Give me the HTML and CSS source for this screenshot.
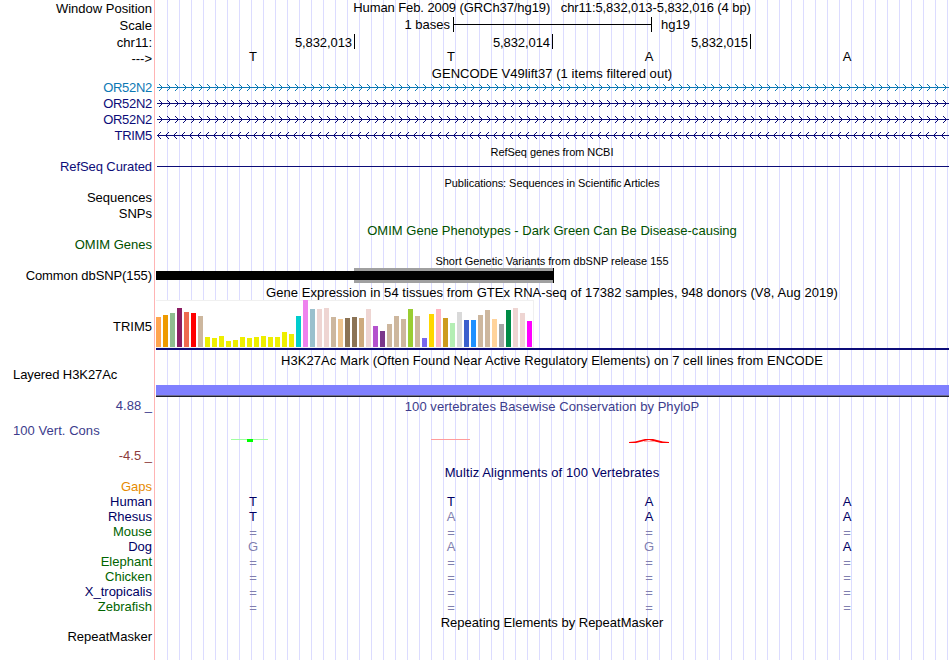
FILE: index.html
```html
<!DOCTYPE html>
<html lang="en">
<head>
    <meta charset="UTF-8">
    <title>Genome Browser</title>
    <link rel="stylesheet" href="styles.css">
</head>
<body>
    <div class="browser">
        <div class="row ruler">
            <div class="label">Window Position</div>
            <div class="plot center position">Human Feb. 2009 (GRCh37/hg19) &nbsp; chr11:5,832,013-5,832,016 (4 bp)</div>
        </div>
        <div class="row ruler">
            <div class="label">Scale</div>
            <div class="plot scale"><span class="scale-text">1 bases</span><span class="scale-bar"></span><span>hg19</span></div>
        </div>
        <div class="row ruler">
            <div class="label">chr11:</div>
            <div class="plot ticks"><span>5,832,013</span><span>5,832,014</span><span>5,832,015</span></div>
        </div>
        <div class="row strand">
            <div class="label">---&gt;</div>
            <div class="plot bases"><span>T</span><span>T</span><span>A</span><span>A</span></div>
        </div>

        <div class="title wide">GENCODE V49lift37 (1 items filtered out)</div>
        <div class="row gene">
            <div class="label teal">OR52N2</div>
            <svg class="plot teal" data-dir="fwd" width="794" height="16"></svg>
        </div>
        <div class="row gene">
            <div class="label blue">OR52N2</div>
            <svg class="plot blue" data-dir="fwd" width="794" height="16"></svg>
        </div>
        <div class="row gene">
            <div class="label blue">OR52N2</div>
            <svg class="plot blue" data-dir="fwd" width="794" height="16"></svg>
        </div>
        <div class="row gene">
            <div class="label blue">TRIM5</div>
            <svg class="plot blue" data-dir="rev" width="794" height="16"></svg>
        </div>

        <div class="title small">RefSeq genes from NCBI</div>
        <div class="row">
            <div class="label narrow blue">RefSeq Curated</div>
            <div class="plot"><div class="refseq-line"></div></div>
        </div>

        <div class="title small">Publications: Sequences in Scientific Articles</div>
        <div class="row"><div class="label">Sequences</div></div>
        <div class="row"><div class="label">SNPs</div></div>

        <div class="title spaced green omim">OMIM Gene Phenotypes - Dark Green Can Be Disease-causing</div>
        <div class="row"><div class="label green">OMIM Genes</div></div>

        <div class="title small snp-title">Short Genetic Variants from dbSNP release 155</div>
        <div class="row snp">
            <div class="label narrow">Common dbSNP(155)</div>
            <svg class="plot" width="794" height="17">
                <rect x="199" y="0" width="199" height="15" fill="#a0a0a0"/>
                <rect x="1" y="3" width="397" height="9"/>
                <rect x="398" y="0" width="1" height="15"/>
            </svg>
        </div>

        <div class="title tall wide">Gene Expression in 54 tissues from GTEx RNA-seq of 17382 samples, 948 donors (V8, Aug 2019)</div>
        <div class="row gtex">
            <div class="label">TRIM5</div>
            <div class="plot">
                <div class="bars" id="bars"></div>
                <div class="gene-line"></div>
            </div>
        </div>

        <div class="title wide">H3K27Ac Mark (Often Found Near Active Regulatory Elements) on 7 cell lines from ENCODE</div>
        <div class="row h3k27">
            <div class="label left narrow">Layered H3K27Ac</div>
            <div class="plot"><div class="signal"></div></div>
        </div>

        <div class="row cons">
            <div class="cons-labels">
                <div class="label violet">4.88 _</div>
                <div class="label left wide violet">100 Vert. Cons</div>
                <div class="label maroon">-4.5 _</div>
            </div>
            <div class="plot">
                <div class="cons-title wide violet">100 vertebrates Basewise Conservation by PhyloP</div>
                <svg width="794" height="20">
                    <rect x="76" y="6" width="37" height="1" fill="#a0ffa0"/>
                    <rect x="92" y="6" width="6" height="3" fill="#00ff00"/>
                    <rect x="276" y="6" width="39" height="1" fill="#ff9c9c"/>
                    <path d="M474 9 L480 8.6 L490 6 H498 L508 8.6 L514 9 V10 H506 L497 7.8 L494 7 L490 7.8 L481 10 H474 Z" fill="#ff0000"/>
                    <path d="M489 8.5 H499" stroke="#ffb0b0"/>
                </svg>
            </div>
        </div>

        <div class="title navy multiz">Multiz Alignments of 100 Vertebrates</div>
        <div class="row align"><div class="label orange">Gaps</div></div>
        <div class="row align">
            <div class="label navy">Human</div>
            <div class="plot bases navy"><span>T</span><span>T</span><span>A</span><span>A</span></div>
        </div>
        <div class="row align">
            <div class="label navy">Rhesus</div>
            <div class="plot bases navy"><span>T</span><span class="dim">A</span><span>A</span><span>A</span></div>
        </div>
        <div class="row align">
            <div class="label leaf">Mouse</div>
            <div class="plot bases dim eq"><span>=</span><span>=</span><span>=</span><span>=</span></div>
        </div>
        <div class="row align">
            <div class="label navy">Dog</div>
            <div class="plot bases dim"><span>G</span><span>A</span><span>G</span><span class="navy">A</span></div>
        </div>
        <div class="row align">
            <div class="label leaf">Elephant</div>
            <div class="plot bases dim eq"><span>=</span><span>=</span><span>=</span><span>=</span></div>
        </div>
        <div class="row align">
            <div class="label leaf">Chicken</div>
            <div class="plot bases dim eq"><span>=</span><span>=</span><span>=</span><span>=</span></div>
        </div>
        <div class="row align">
            <div class="label navy">X_tropicalis</div>
            <div class="plot bases dim eq"><span>=</span><span>=</span><span>=</span><span>=</span></div>
        </div>
        <div class="row align">
            <div class="label leaf">Zebrafish</div>
            <div class="plot bases dim eq"><span>=</span><span>=</span><span>=</span><span>=</span></div>
        </div>

        <div class="title spaced repeat">Repeating Elements by RepeatMasker</div>
        <div class="row"><div class="label">RepeatMasker</div></div>
    </div>
    <script>
        // GTEx tissues: colour, height in px
        const tissues = [
            ['#ffa54f', 30], ['#ee9a00', 32], ['#8fbc8f', 34], ['#8b1c62', 39], ['#ee6a50', 35], ['#ff0000', 34],
            ['#cdb79e', 31], ['#eeee00', 10], ['#eeee00', 9], ['#eeee00', 11], ['#eeee00', 6], ['#eeee00', 7],
            ['#eeee00', 10], ['#eeee00', 9], ['#eeee00', 10], ['#eeee00', 11], ['#eeee00', 10], ['#eeee00', 10],
            ['#eeee00', 15], ['#eeee00', 13], ['#00cdcd', 31], ['#ee82ee', 47], ['#9ac0cd', 38], ['#eed5d2', 38],
            ['#eed5d2', 39], ['#cdb79e', 30], ['#eec591', 28], ['#8b7355', 29], ['#8b7355', 30], ['#cdaa7d', 29],
            ['#eed5d2', 38], ['#b452cd', 21], ['#7a378b', 16], ['#cdb79e', 23], ['#cdb79e', 31], ['#cdb79e', 28],
            ['#9acd32', 38], ['#cdb79e', 31], ['#7a67ee', 9], ['#ffd700', 33], ['#ffb6c1', 38], ['#cd9b1d', 29],
            ['#b4eeb4', 24], ['#d9d9d9', 35], ['#3a5fcd', 27], ['#1e90ff', 27], ['#cdb79e', 32], ['#cdb79e', 37],
            ['#ffd39b', 28], ['#a6a6a6', 23], ['#008b45', 37], ['#eed5d2', 39], ['#eed5d2', 34], ['#ff00ff', 26]
        ];
        document.getElementById('bars').innerHTML = tissues
            .map(([color, h]) => `<i style="height:${h}px;background:${color}"></i>`)
            .join('');

        // intron lines with strand arrows every 8px
        document.querySelectorAll('svg[data-dir]').forEach(svg => {
            let d = '';
            for (let x = 2; x < 794; x += 8) {
                d += svg.dataset.dir === 'fwd'
                    ? `M${x + 2} 4l3.5 3.5l-3.5 3.5`
                    : `M${x + 4} 4l-3.5 3.5l3.5 3.5`;
            }
            svg.innerHTML = `<path class="intron" d="M2 7.5H794"/><path class="arrows" d="${d}"/>`;
        });
    </script>
</body>
</html>
```
FILE: styles.css
```css
body {
    margin: 0;
    background: white;
    font-family: "Liberation Sans", Arial, Helvetica, sans-serif;
    font-size: 13px;
    line-height: 15px;
    color: black;
}
.browser {
    width: 949px;
    height: 660px;
    overflow: hidden;
    white-space: nowrap;
    background:
        linear-gradient(#ffb4b4, #ffb4b4) 154px 0 / 1px 100% no-repeat,
        linear-gradient(white, white) 0 0 / 156px 100% no-repeat,
        linear-gradient(to right, #dcdcff 1px, transparent 1px) 11px 0 / 12px 100%;
}
.row {
    display: flex;
    height: 16px;
}
.label {
    width: 152px;
    margin-right: 3px;
    text-align: right;
    flex-shrink: 0;
}
.label.left {
    width: 139px;
    padding-left: 13px;
    text-align: left;
}
.plot {
    width: 794px;
    flex-shrink: 0;
}
.center {
    text-align: center;
}
.title {
    height: 14px;
    margin-left: 155px;
    text-align: center;
}
.title.small {
    height: 15px;
    font-size: 11px;
    line-height: 16px;
    letter-spacing: -0.06px;
}
.title.tall {
    height: 15px;
}
.title.spaced {
    margin-top: 1px;
}

/* tracking */
.wide {
    letter-spacing: 0.05px;
}
.narrow {
    letter-spacing: -0.09px;
}
.position {
    letter-spacing: -0.085px;
}
.title.snp-title {
    letter-spacing: 0;
}
.omim {
    letter-spacing: 0.02px;
}
.multiz {
    letter-spacing: 0.1px;
}

/* ruler */
.ruler {
    height: 17px;
}
.ruler .label {
    line-height: 17px;
}
.scale {
    display: flex;
}
.scale-text {
    width: 295px;
    margin-right: 3px;
    text-align: right;
}
.scale-bar {
    width: 197px;
    height: 15px;
    margin-right: 9px;
    border: solid black;
    border-width: 0 1px;
    background: linear-gradient(black, black) 0 7px / 100% 1px no-repeat;
}
.ticks {
    display: flex;
    padding-left: 2px;
    box-sizing: border-box;
    line-height: 17px;
    letter-spacing: -0.08px;
}
.ticks span {
    box-sizing: border-box;
    width: 198px;
    height: 15px;
    padding-right: 2px;
    border-right: 1px solid black;
    text-align: right;
}
.bases {
    display: flex;
    margin-left: -1px;
}
.bases span {
    width: 198px;
    text-align: center;
}
.strand {
    height: 15px;
}
.strand .bases {
    line-height: 11px;
}

/* tracks */
.gene .label {
    letter-spacing: -0.3px;
}
.intron, .arrows {
    fill: none;
    stroke: currentColor;
}
.refseq-line {
    height: 1px;
    margin: 7px 0 0 2px;
    background: #0c0c78;
}
.snp {
    height: 17px;
}
.gtex {
    height: 53px;
}
.gtex .label {
    padding-top: 19px;
}
.bars {
    display: flex;
    align-items: flex-end;
    gap: 2px;
    box-sizing: border-box;
    width: 378px;
    height: 48px;
    margin-left: 1px;
    background: white;
    border: solid #f0f0f0;
    border-width: 0 1px 1px 0;
    box-shadow: inset 0 1px #f0f0f0;
}
.bars i {
    width: 5px;
    flex-shrink: 0;
}
.gene-line {
    height: 2px;
    margin-left: 1px;
    background: #0c0c78;
}
.h3k27 {
    height: 31px;
}
.signal {
    height: 10px;
    margin: 18px 0 0 1px;
    background: #8080ff;
    border-bottom: 1px solid #6b6b90;
    box-shadow: 0 1px #202030;
}
.cons {
    height: 67px;
}
.cons-labels .label {
    height: 25px;
}
.cons-title {
    margin-top: 1px;
    height: 34px;
    text-align: center;
}
.cons svg {
    display: block;
}
.align {
    height: 15px;
}
.eq {
    line-height: 17px;
}

/* colours */
.teal { color: #0c78b4; }
.blue { color: #0c0c78; }
.navy { color: #000064; }
.green { color: #005000; }
.leaf { color: #006400; }
.violet { color: #3c3c8c; }
.maroon { color: #8c3c3c; }
.orange { color: #e68a00; }
.dim { color: #8080b0; }
```
